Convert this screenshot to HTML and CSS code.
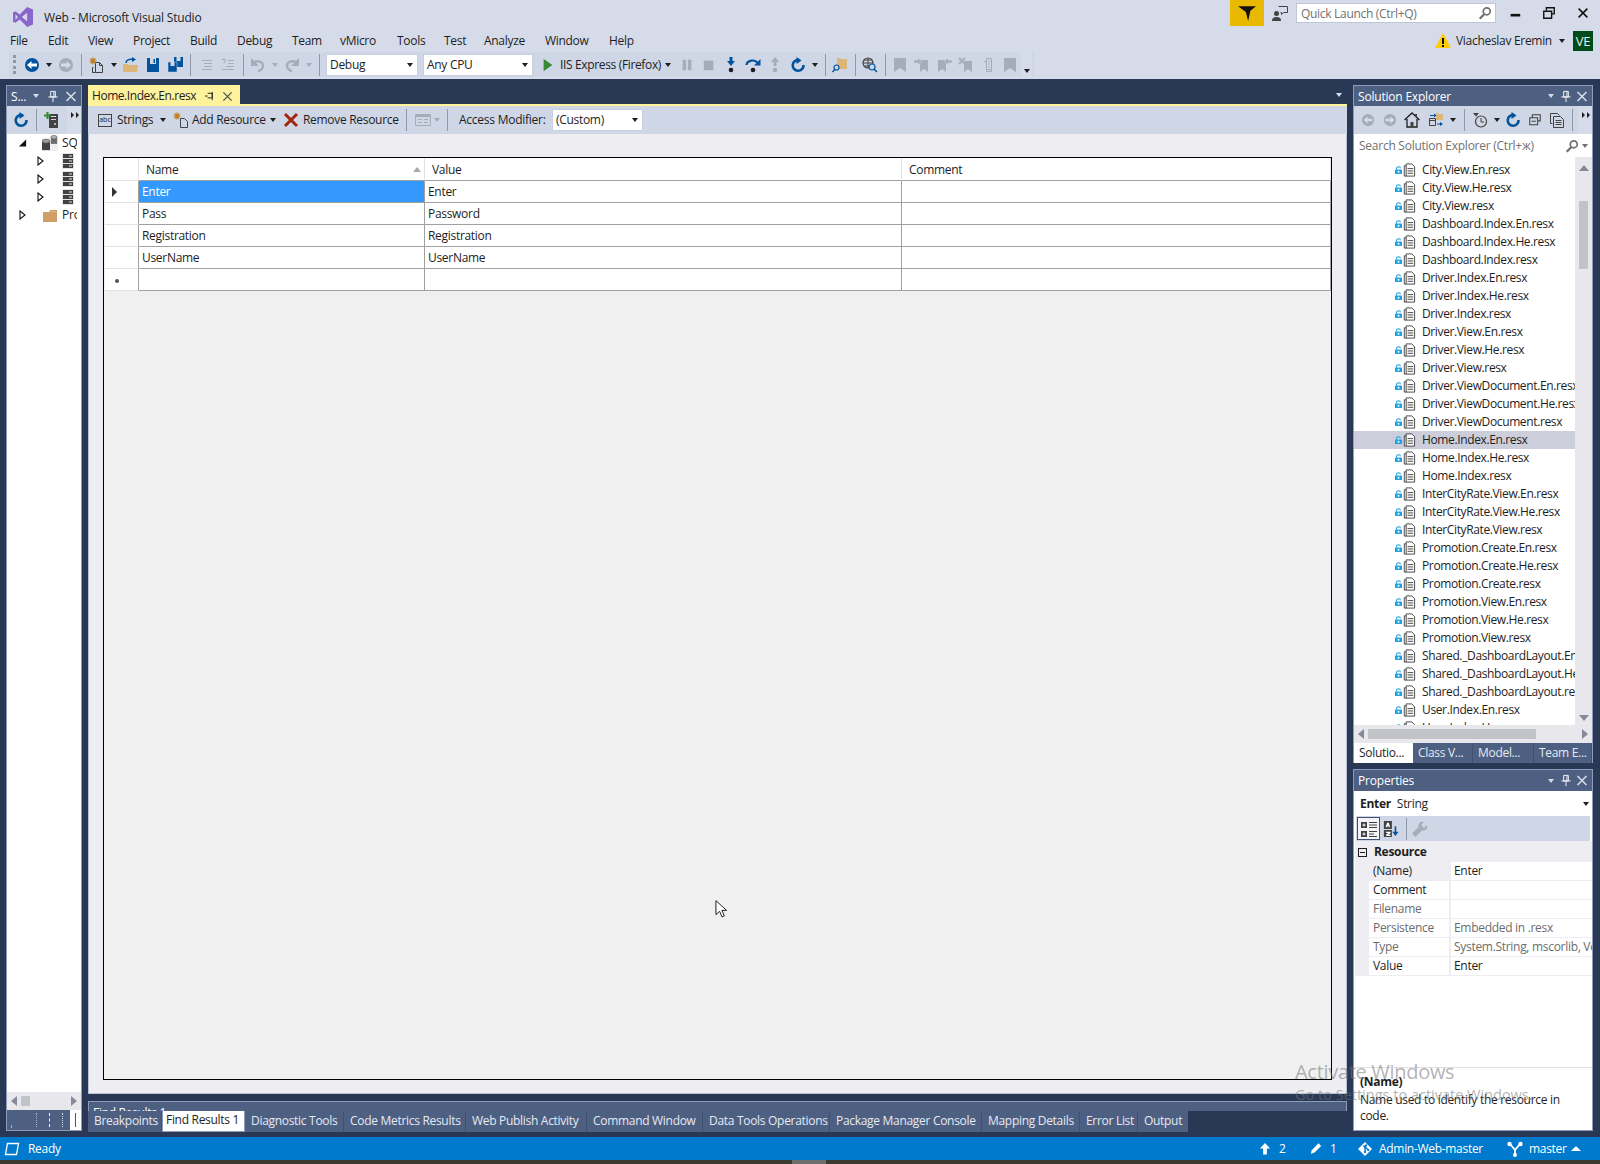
FILE: index.html
```html
<!DOCTYPE html>
<html lang="en">
<head>
<meta charset="utf-8">
<title>Web - Microsoft Visual Studio</title>
<link rel="stylesheet" href="styles.css">
</head>
<body>
<svg class="defs" aria-hidden="true">
<symbol id="vs" viewBox="0 0 16 16"><path fill="#8a66cc" fill-rule="evenodd" d="M11.3 0 5.4 6 2 3.4 0 4.3v7.4l2 .9L5.4 10l5.9 6 4.7-2V2zM11.3 4.6v6.8L7 8zM2 5.8 3.9 8 2 10.2z"/></symbol>
<symbol id="back" viewBox="0 0 16 16"><circle cx="8" cy="8" r="7" fill="#00539c"/><path fill="#fff" d="M3 8l4.5-4v2.6H13v2.8H7.500V12z"/></symbol>
<symbol id="backd" viewBox="0 0 16 16"><circle cx="8" cy="8" r="7" fill="#a6adba"/><path fill="#d6dbe9" d="M3 8l4.500-4v2.600H13v2.800H7.500V12z"/></symbol>
<symbol id="fwdd" viewBox="0 0 16 16"><circle cx="8" cy="8" r="7" fill="#a6adba"/><path fill="#d6dbe9" d="M13 8 8.500 4v2.600H3v2.800h5.500V12z"/></symbol>
<symbol id="new" viewBox="0 0 16 16"><path fill="none" stroke="#424242" d="M6.500 5.500h4l3 3v7h-7zM10.500 5.500v3h3M4.500 10.500h-1v5h3"/><path stroke="#c27d1a" stroke-width="1.200" d="M4 .5v7M.5 4h7M1.500 1.500l5 5M6.500 1.500l-5 5"/></symbol>
<symbol id="open" viewBox="0 0 16 16"><path fill="#dcb67a" d="M0 7h5l1 1h9l-1 7H0z"/><path fill="none" stroke="#00539c" stroke-width="1.500" d="M3 6C3 3 6 2 10 2.500"/><path fill="#00539c" d="M9 0l4 2.500L9 5z"/></symbol>
<symbol id="save" viewBox="0 0 16 16"><path fill="#00539c" d="M2 1h12v14H2z"/><path fill="#cfd6e5" d="M5 1h6v6H5z"/><path fill="#00539c" d="M8.500 2H10v4H8.500z"/></symbol>
<symbol id="saveall" viewBox="0 0 16 16"><path fill="#00539c" d="M7 0h9v10H7z"/><path fill="#cfd6e5" d="M9.500 0h4v4h-4z"/><path fill="#00539c" d="M1 5h9v10H1z" stroke="#cfd6e5" stroke-width=".5"/><path fill="#cfd6e5" d="M3.500 5h4v4h-4z"/></symbol>
<symbol id="lines" viewBox="0 0 16 16"><path stroke="#a6adba" d="M4 3.500h10M6 6.500h8M6 9.500h8M4 12.500h10"/></symbol>
<symbol id="lines2" viewBox="0 0 16 16"><path stroke="#a6adba" d="M8 3.500h6M8 6.500h6M6 9.500h8M2 12.500h12"/><path fill="none" stroke="#a6adba" stroke-width="1.200" d="M2 3c2-2 4 0 3 1.500L3.500 6.500"/></symbol>
<symbol id="undo" viewBox="0 0 16 16"><path fill="none" stroke="#a6adba" stroke-width="2.400" d="M4 5c5-2 9 0 9 4 0 3-3 5-5 5"/><path fill="#a6adba" d="M1 1v8h8z"/></symbol>
<symbol id="redo" viewBox="0 0 16 16"><path fill="none" stroke="#a6adba" stroke-width="2.400" d="M12 5C7 3 3 5 3 9c0 3 3 5 5 5"/><path fill="#a6adba" d="M15 1v8H7z"/></symbol>
<symbol id="play" viewBox="0 0 16 16"><path fill="#388a34" d="M3 1l10 7-10 7z"/></symbol>
<symbol id="pause" viewBox="0 0 16 16"><path fill="#a6adba" d="M3 2h4v12H3zM9 2h4v12H9z"/></symbol>
<symbol id="stop" viewBox="0 0 16 16"><path fill="#a6adba" d="M2 3h11v11H2z"/></symbol>
<symbol id="stepin" viewBox="0 0 16 16"><path fill="#00539c" d="M6.500 0h3v4H12L8 9 4 4h2.500z"/><circle cx="8" cy="13" r="2.300" fill="#1e1e1e"/></symbol>
<symbol id="stepover" viewBox="0 0 16 16"><path fill="none" stroke="#00539c" stroke-width="2.200" d="M1.500 8C2 3 10 2 12.500 6"/><path fill="#00539c" d="M15.500 2v6.500H9z"/><circle cx="8" cy="13" r="2.300" fill="#1e1e1e"/></symbol>
<symbol id="stepout" viewBox="0 0 16 16"><path fill="#a6adba" d="M6.500 9h3V5H12L8 0 4 5h2.500z"/><circle cx="8" cy="13" r="2.300" fill="#a6adba"/></symbol>
<symbol id="refresh" viewBox="0 0 16 16"><path fill="none" stroke="#00539c" stroke-width="2.600" d="M9.500 3.200a5.400 5.400 0 1 0 4 4.800"/><path fill="#00539c" d="M6.500 0v7l5-3.500z"/></symbol>
<symbol id="findf" viewBox="0 0 16 16"><path fill="#dcb67a" d="M5 1h3l1 1h6v10H5z"/><circle cx="4.500" cy="10.500" r="2.500" fill="#cfd6e5" stroke="#00539c" stroke-width="1.200"/><path stroke="#00539c" stroke-width="1.400" d="M2.800 12.500 0.500 15"/></symbol>
<symbol id="globe" viewBox="0 0 16 16"><circle cx="6" cy="6" r="5" fill="none" stroke="#424242" stroke-width="1.200"/><path stroke="#424242" d="M1 6h10M6 1v10M2.500 3h7M2.500 9h7"/><circle cx="10" cy="10" r="3" fill="#cfd6e5" stroke="#00539c" stroke-width="1.200"/><path stroke="#00539c" stroke-width="1.500" d="M12 12l3 3"/></symbol>
<symbol id="bm" viewBox="0 0 16 16"><path fill="#a6adba" d="M2 1h12v14l-6-4-6 4z"/></symbol>
<symbol id="bm2" viewBox="0 0 16 16"><path fill="#a6adba" d="M6 3h8v12l-4-3-4 3z"/><path fill="#a6adba" stroke="#cfd6e5" stroke-width=".5" d="M0 3h4V1l4 3.500L4 8V6H0z"/></symbol>
<symbol id="bm3" viewBox="0 0 16 16"><path fill="#a6adba" d="M2 3h8v12l-4-3-4 3z"/><path fill="#a6adba" stroke="#cfd6e5" stroke-width=".5" d="M16 3h-4V1L8 4.500 12 8V6h4z"/></symbol>
<symbol id="bm4" viewBox="0 0 16 16"><path fill="#a6adba" d="M6 4h8v11l-4-3-4 3z"/><path stroke="#a6adba" stroke-width="1.800" d="M1 1l6 6M7 1L1 7"/></symbol>
<symbol id="bm5" viewBox="0 0 16 16"><path fill="none" stroke="#a6adba" d="M6.500 1.500h5v11h-5zM3.500 4.500h3v10h5v-2M8 4h2M8 7h2M8 10h2"/></symbol>
<symbol id="funnel" viewBox="0 0 16 16"><path fill="#111" d="M0 2h16l-5 4-2 9-2-8z"/></symbol>
<symbol id="feedback" viewBox="0 0 16 16"><circle cx="4.500" cy="8.500" r="2.500" fill="#424242"/><path fill="#424242" d="M0 16c0-3 1.500-4 4.500-4S9 13 9 16z"/><path fill="none" stroke="#424242" d="M6.500 1.500h9v6h-4l-2 2v-2h-1"/></symbol>
<symbol id="mag" viewBox="0 0 16 16"><circle cx="10" cy="6" r="4" fill="none" stroke="#717171" stroke-width="2"/><path stroke="#717171" stroke-width="2.600" d="M7 9.500 2 14.500"/></symbol>
<symbol id="min" viewBox="0 0 16 16"><path fill="#111" d="M3 9h11v3H3z"/></symbol>
<symbol id="rest" viewBox="0 0 16 16"><path fill="none" stroke="#111" stroke-width="1.600" d="M5 5V2h9v7h-3"/><path fill="none" stroke="#111" stroke-width="1.600" d="M2 6h9v8H2z"/></symbol>
<symbol id="close" viewBox="0 0 16 16"><path stroke="#111" stroke-width="1.800" d="M3 3l10 10M13 3 3 13"/></symbol>
<symbol id="warn" viewBox="0 0 16 16"><path fill="#fc0" d="M8 0l8 15H0z"/><path fill="#111" d="M7 5h2v6H7zM7 12h2v2H7z"/></symbol>
<symbol id="pin" viewBox="0 0 12 14"><path fill="none" stroke="#fff" d="M3.500 1.500h5v6h-5zM1 7.500h10M6 8v5M7 2v5"/></symbol>
<symbol id="pind" viewBox="0 0 12 12"><path fill="none" stroke="#1e1e1e" d="M4 2.500h5v5H4M1 5.500h3M9 1v9"/></symbol>
<symbol id="x" viewBox="0 0 12 12"><path stroke="#d6dbe9" stroke-width="1.600" d="M1.500 1.500l9 9M10.500 1.500l-9 9"/></symbol>
<symbol id="xd" viewBox="0 0 12 12"><path stroke="#555" stroke-width="1.500" d="M1.500 1.500l9 9M10.500 1.500l-9 9"/></symbol>
<symbol id="dots" viewBox="0 0 8 6"><path fill="#1e1e1e" d="M0 0l3 3-3 3zM5 0l3 3-3 3z"/></symbol>
<symbol id="addsrv" viewBox="0 0 16 16"><path fill="#424242" d="M6 2h9v14H6z"/><path fill="#cfd6e5" d="M8 4h5v1H8zM8 7h5v1H8z"/><circle cx="12" cy="12" r="1" fill="#cfd6e5"/><path stroke="#388a34" stroke-width="2" d="M4.500 0v7M1 3.500h7"/></symbol>
<symbol id="sql" viewBox="0 0 18 18"><path fill="#d6d6d6" d="M0 3h18v15H0z" opacity=".4"/><path fill="#424242" d="M0 7h9v10H0z"/><ellipse cx="4.500" cy="7" rx="4.500" ry="2.200" fill="#9a9a9a" stroke="#424242" stroke-width=".6"/><path fill="#6d6d6d" d="M10 2h7v8h-7z"/><ellipse cx="13.500" cy="2.500" rx="3.500" ry="2" fill="#b5b5b5" stroke="#424242" stroke-width=".6"/></symbol>
<symbol id="srv" viewBox="0 0 12 16"><path fill="#e4e4e4" d="M0 0h12v16H0z"/><path fill="#424242" d="M1 1h10v4H1zM1 6h10v4H1zM1 11h10v4H1z"/><path fill="#e4e4e4" d="M7 2.500h3v1H7zM7 7.500h3v1H7zM7 12.500h3v1H7z"/></symbol>
<symbol id="folder" viewBox="0 0 16 14"><path fill="#cf9f66" d="M1 4h6l1-2h7v12H1z"/><path fill="#e5c9a4" d="M7.500 3.500h6.500V3H8z"/></symbol>
<symbol id="triout" viewBox="0 0 8 10"><path fill="#fff" stroke="#111" stroke-width="1.100" d="M1.500 1v8l5-4z"/></symbol>
<symbol id="tridn" viewBox="0 0 10 10"><path fill="#111" d="M1 9h8V1z"/></symbol>
<symbol id="doc" viewBox="0 0 16 16"><path fill="#fff" stroke="#424242" d="M5.500 1.500h6l3 3v10h-9zM3.500 3.500h2M3.500 3.500v11h2"/><path stroke="#424242" d="M7 6.500h6M7 9h6M7 11.500h6"/></symbol>
<symbol id="lock" viewBox="0 0 8 9"><path fill="#1ba1e2" d="M0 4h8v5H0z"/><path fill="none" stroke="#1ba1e2" stroke-width="1.300" d="M1.800 4V2.500c0-2.300 4.400-2.300 4.400 0"/><path fill="#fff" d="M3 5.500h2v2H3z"/></symbol>
<symbol id="home" viewBox="0 0 16 16"><path fill="none" stroke="#1e1e1e" stroke-width="1.300" d="M.5 8 8 1l7.500 7M3 7v8h10V7"/><path fill="#424242" d="M6.500 10h3v5h-3zM11 2h2v3h-2z"/></symbol>
<symbol id="sync" viewBox="0 0 16 16"><path fill="#dcb67a" d="M8 1h2l1 1h4v6H8z"/><path fill="none" stroke="#424242" d="M1.500 6.500h6v7h-6zM1.500 8.500h6"/><path stroke="#00539c" d="M9 12h5M2 3.500h4"/><path fill="#00539c" d="M6 1.500l2.500 2L6 5.500zM12 10l3 2-3 2z"/></symbol>
<symbol id="hist" viewBox="0 0 16 16"><circle cx="9" cy="9.500" r="5.500" fill="none" stroke="#424242" stroke-width="1.200"/><path fill="none" stroke="#424242" d="M9 6v4h3"/><path fill="#424242" d="M1 1h6L4 4.500z"/></symbol>
<symbol id="coll" viewBox="0 0 16 16"><path fill="none" stroke="#424242" stroke-width="1.200" d="M5 5V2h9v7h-3M2 5.500h9v8H2zM4 9.500h5"/></symbol>
<symbol id="copy" viewBox="0 0 16 16"><path fill="none" stroke="#424242" d="M1.500 1.500h7l2 2M1.500 1.500v10h2M4.500 4.500h7l3 3v8h-10zM6.500 8.500h6M6.500 10.500h6M6.500 12.500h6"/></symbol>
<symbol id="del" viewBox="0 0 16 16"><path stroke="#a1260d" stroke-width="3" d="M2 2l12 12M14 2 2 14"/></symbol>
<symbol id="star" viewBox="0 0 16 16"><path fill="none" stroke="#424242" d="M7.500 6.500h4l3 3v6h-7z"/><path stroke="#c27d1a" stroke-width="1.200" d="M4 .5v7M.5 4h7M1.500 1.500l5 5M6.500 1.500l-5 5"/></symbol>
<symbol id="form" viewBox="0 0 16 16"><path fill="none" stroke="#a6adba" d="M.5 2.500h15v11H.5z"/><path fill="#a6adba" d="M1 3h14v2H1zM3 7h4v1H3zM9 7h4v1H9zM3 10h4v1H3zM9 10h4v1H9z"/></symbol>
<symbol id="cat" viewBox="0 0 18 18"><path fill="#424242" d="M1 2h6v6H1zM1 11h6v6H1z"/><path fill="#fff" d="M2.500 4.500h3v1h-3zM2.500 13.500h3v1h-3zM3.500 3.500h1v3h-1zM3.500 12.500h1v3h-1z"/><path stroke="#424242" d="M9 2.500h8M9 5h8M9 7.500h8M9 11.500h8M9 14h5M9 16.500h8"/></symbol>
<symbol id="az" viewBox="0 0 18 18"><path fill="#424242" d="M1 0h9v9H1zM1 10h9v8H1z"/><path fill="#fff" d="M4.500 2h2l1.500 5H6.500l-.3-1H4.800l-.3 1H3zM3.500 12h5v1.500L6 15.500h2.500V17h-5v-1.500L6 13.500H3.500z"/><path stroke="#00539c" stroke-width="1.800" d="M14 6v9"/><path fill="#00539c" d="M10.500 12h7L14 17z"/></symbol>
<symbol id="wrench" viewBox="0 0 16 16"><path fill="#a6adba" d="M15 4l-3 3-3-3 3-3c-3-1-6 1-5.500 5L0 12.500 3.500 16 10 9.500c4 .5 6-2.500 5-5.500z"/></symbol>
<symbol id="stReady" viewBox="0 0 16 14"><path fill="none" stroke="#fff" stroke-width="1.300" d="M3.500 1.500h11l-2 11h-11z"/></symbol>
<symbol id="stUp" viewBox="0 0 12 14"><path fill="#fff" d="M6 1l5.500 6H8v6.500H4V7H.5z"/></symbol>
<symbol id="stPen" viewBox="0 0 14 14"><path fill="#fff" d="M10 1l3 3-8 8-4 1 1-4z"/></symbol>
<symbol id="stGit" viewBox="0 0 14 14"><path fill="#fff" fill-rule="evenodd" d="M7 0l7 7-7 7-7-7zM5.500 3.500 4.800 4.200 6.300 5.700V9a1.200 1.200 0 1 0 1.500 0V6.500L9 7.700a1.200 1.200 0 1 0 1-1L7.800 4.600a1.200 1.200 0 1 0-1-1z"/></symbol>
<symbol id="stBranch" viewBox="0 0 16 16"><path fill="none" stroke="#fff" stroke-width="1.800" d="M8 14V9L3 3M8 9l5-6"/><circle cx="2.500" cy="3" r="2.200" fill="#fff"/><circle cx="13.500" cy="3" r="2.200" fill="#fff"/><circle cx="8" cy="14" r="2" fill="#fff"/></symbol>
</svg>

<div class="app">
  <header class="titlebar">
    <div class="title-row">
      <svg class="logo"><use href="#vs"/></svg>
      <span class="title-text">Web - Microsoft Visual Studio</span>
      <span class="grow"></span>
      <span class="filter-box"><svg class="i18"><use href="#funnel"/></svg></span>
      <span class="feedback"><svg class="i16"><use href="#feedback"/></svg></span>
      <span class="quick"><span class="quick-text">Quick Launch (Ctrl+Q)</span><svg class="i14"><use href="#mag"/></svg></span>
      <span class="win-btn"><svg class="i14"><use href="#min"/></svg></span>
      <span class="win-btn"><svg class="i14"><use href="#rest"/></svg></span>
      <span class="win-btn"><svg class="i14"><use href="#close"/></svg></span>
    </div>
    <div class="menu-row">
      <nav class="menu">
        <span>File</span><span>Edit</span><span>View</span><span>Project</span><span>Build</span><span>Debug</span><span>Team</span><span>vMicro</span><span>Tools</span><span>Test</span><span>Analyze</span><span>Window</span><span>Help</span>
      </nav>
      <span class="grow"></span>
      <svg class="i16"><use href="#warn"/></svg>
      <span class="account">Viacheslav Eremin</span>
      <span class="caret caret-wide"></span>
      <span class="avatar">VE</span>
    </div>
    <div class="main-toolbar">
      <span class="gripper"></span>
      <span class="tool"><svg class="i16"><use href="#back"/></svg></span><span class="caret"></span>
      <span class="tool"><svg class="i16"><use href="#fwdd"/></svg></span><span class="sep sep-w"></span>
      <span class="tool"><svg class="i16"><use href="#new"/></svg></span><span class="caret"></span>
      <span class="tool"><svg class="i16"><use href="#open"/></svg></span>
      <span class="tool"><svg class="i16"><use href="#save"/></svg></span>
      <span class="tool"><svg class="i16"><use href="#saveall"/></svg></span><span class="sep sep-w"></span>
      <span class="tool"><svg class="i16"><use href="#lines"/></svg></span>
      <span class="tool"><svg class="i16"><use href="#lines2"/></svg></span><span class="sep"></span>
      <span class="tool"><svg class="i16"><use href="#undo"/></svg></span><span class="caret caret-off"></span>
      <span class="tool"><svg class="i16"><use href="#redo"/></svg></span><span class="caret caret-off"></span><span class="sep"></span>
      <span class="combo combo-debug">Debug<span class="caret"></span></span>
      <span class="combo combo-cpu">Any CPU<span class="caret"></span></span>
      <span class="tool tool-play"><svg class="i14"><use href="#play"/></svg></span>
      <span class="run-text">IIS Express (Firefox)</span><span class="caret"></span>
      <span class="tool tool-pause"><svg class="i14"><use href="#pause"/></svg></span>
      <span class="tool"><svg class="i14"><use href="#stop"/></svg></span>
      <span class="tool"><svg class="i16"><use href="#stepin"/></svg></span>
      <span class="tool"><svg class="i16"><use href="#stepover"/></svg></span>
      <span class="tool"><svg class="i16"><use href="#stepout"/></svg></span>
      <span class="tool tool-restart"><svg class="i16"><use href="#refresh"/></svg></span><span class="caret"></span><span class="sep"></span>
      <span class="tool"><svg class="i16"><use href="#findf"/></svg></span><span class="sep"></span>
      <span class="tool"><svg class="i16"><use href="#globe"/></svg></span><span class="sep"></span>
      <span class="tool"><svg class="i16"><use href="#bm"/></svg></span>
      <span class="tool"><svg class="i16"><use href="#bm2"/></svg></span>
      <span class="tool"><svg class="i16"><use href="#bm3"/></svg></span>
      <span class="tool"><svg class="i16"><use href="#bm4"/></svg></span>
      <span class="tool"><svg class="i16"><use href="#bm5"/></svg></span>
      <span class="tool"><svg class="i16"><use href="#bm"/></svg></span>
      <span class="overflow"><span class="caret"></span></span>
    </div>
  </header>

  <main class="workspace">
    <section class="col-left">
      <div class="pane pane-fill">
        <div class="pane-title"><span class="pane-name">S...</span><span class="pane-ctl"><span class="caret caret-light"></span><svg class="i12"><use href="#pin"/></svg><svg class="i12"><use href="#x"/></svg></span></div>
        <div class="pane-toolbar">
          <span class="tool"><svg class="i16"><use href="#refresh"/></svg></span><span class="sep"></span>
          <span class="tool"><svg class="i16"><use href="#addsrv"/></svg></span>
          <span class="grow"></span>
          <span class="dots"><svg class="i8"><use href="#dots"/></svg></span>
        </div>
        <div class="tree">
          <div class="tree-row tr-root"><svg class="i8x"><use href="#tridn"/></svg><svg class="i16"><use href="#sql"/></svg><span class="tree-label">SQ</span></div>
          <div class="tree-row tr-child"><svg class="i8x"><use href="#triout"/></svg><svg class="srv"><use href="#srv"/></svg></div>
          <div class="tree-row tr-child"><svg class="i8x"><use href="#triout"/></svg><svg class="srv"><use href="#srv"/></svg></div>
          <div class="tree-row tr-child"><svg class="i8x"><use href="#triout"/></svg><svg class="srv"><use href="#srv"/></svg></div>
          <div class="tree-row tr-root"><svg class="i8x"><use href="#triout"/></svg><svg class="i16"><use href="#folder"/></svg><span class="tree-label">Pro</span></div>
        </div>
        <div class="hscroll hscroll-left"><span class="arrow-l"></span><span class="thumb-left"></span><span class="grow"></span><span class="arrow-r"></span></div>
        <div class="left-tabs"><span class="lt lt-t"></span><span class="lt lt-a"></span><span class="lt lt-b"></span><span class="lt lt-c"></span><span class="lt lt-on"></span></div>
      </div>
    </section>

    <section class="col-doc">
      <div class="doc">
        <div class="doc-tabs">
          <div class="doc-tab"><span class="doc-tab-name">Home.Index.En.resx</span><svg class="i10"><use href="#pind"/></svg><svg class="i10"><use href="#xd"/></svg></div>
          <span class="grow"></span>
          <span class="caret caret-light"></span>
        </div>
        <div class="doc-toolbar">
          <span class="abc">abc</span><span class="dt-label dt-strings">Strings</span><span class="caret"></span>
          <svg class="i16 dt-add"><use href="#star"/></svg><span class="dt-label dt-addres">Add Resource</span><span class="caret"></span>
          <svg class="i16 dt-del"><use href="#del"/></svg><span class="dt-label dt-remove">Remove Resource</span><span class="sep"></span>
          <svg class="i16 dt-form"><use href="#form"/></svg><span class="caret caret-off"></span><span class="sep"></span>
          <span class="dt-label dt-access">Access Modifier:</span>
          <span class="combo combo-access">(Custom)<span class="caret"></span></span>
        </div>
        <div class="doc-body">
          <div class="grid-box">
            <div class="dg-row dg-head"><span class="dg-rh"></span><span class="dg-c dg-name">Name<span class="sort"></span></span><span class="dg-c">Value</span><span class="dg-c">Comment</span></div>
            <div class="dg-row"><span class="dg-rh"><span class="rh-arrow"></span></span><span class="dg-c dg-sel">Enter</span><span class="dg-c">Enter</span><span class="dg-c"></span></div>
            <div class="dg-row"><span class="dg-rh"></span><span class="dg-c">Pass</span><span class="dg-c">Password</span><span class="dg-c"></span></div>
            <div class="dg-row"><span class="dg-rh"></span><span class="dg-c">Registration</span><span class="dg-c">Registration</span><span class="dg-c"></span></div>
            <div class="dg-row"><span class="dg-rh"></span><span class="dg-c">UserName</span><span class="dg-c">UserName</span><span class="dg-c"></span></div>
            <div class="dg-row"><span class="dg-rh"><span class="rh-star"></span></span><span class="dg-c"></span><span class="dg-c"></span><span class="dg-c"></span></div>
          </div>
        </div>
      </div>
      <div class="find-stub"><span class="find-stub-text">Find Results 1</span></div>
      <div class="bottom-tabs">
        <span>Breakpoints</span><span class="bt-on">Find Results 1</span><span>Diagnostic Tools</span><span>Code Metrics Results</span><span>Web Publish Activity</span><span>Command Window</span><span>Data Tools Operations</span><span>Package Manager Console</span><span>Mapping Details</span><span>Error List</span><span>Output</span>
      </div>
    </section>

    <section class="col-right">
      <div class="pane pane-se">
        <div class="pane-title"><span class="pane-name">Solution Explorer</span><span class="pane-ctl"><span class="caret caret-light"></span><svg class="i12"><use href="#pin"/></svg><svg class="i12"><use href="#x"/></svg></span></div>
        <div class="pane-toolbar se-toolbar">
          <span class="tool"><svg class="i14"><use href="#backd"/></svg></span>
          <span class="tool"><svg class="i14"><use href="#fwdd"/></svg></span>
          <span class="tool"><svg class="i16"><use href="#home"/></svg></span>
          <span class="tool tool-sync"><svg class="i16"><use href="#sync"/></svg></span><span class="caret"></span><span class="sep sep-2"></span>
          <span class="tool"><svg class="i16"><use href="#hist"/></svg></span><span class="caret"></span>
          <span class="tool tool-tight"><svg class="i16"><use href="#refresh"/></svg></span>
          <span class="tool"><svg class="i14"><use href="#coll"/></svg></span>
          <span class="tool"><svg class="i16"><use href="#copy"/></svg></span><span class="sep"></span>
          <span class="grow"></span>
          <span class="dots"><svg class="i8"><use href="#dots"/></svg></span>
        </div>
        <div class="se-search"><span class="se-search-text">Search Solution Explorer (Ctrl+ж)</span><svg class="i14"><use href="#mag"/></svg><span class="caret caret-grey"></span></div>
        <div class="se-body">
          <div class="se-list">
            <div class="se-row"><svg class="lock"><use href="#lock"/></svg><svg class="doc-ic"><use href="#doc"/></svg><span>City.View.En.resx</span></div>
            <div class="se-row"><svg class="lock"><use href="#lock"/></svg><svg class="doc-ic"><use href="#doc"/></svg><span>City.View.He.resx</span></div>
            <div class="se-row"><svg class="lock"><use href="#lock"/></svg><svg class="doc-ic"><use href="#doc"/></svg><span>City.View.resx</span></div>
            <div class="se-row"><svg class="lock"><use href="#lock"/></svg><svg class="doc-ic"><use href="#doc"/></svg><span>Dashboard.Index.En.resx</span></div>
            <div class="se-row"><svg class="lock"><use href="#lock"/></svg><svg class="doc-ic"><use href="#doc"/></svg><span>Dashboard.Index.He.resx</span></div>
            <div class="se-row"><svg class="lock"><use href="#lock"/></svg><svg class="doc-ic"><use href="#doc"/></svg><span>Dashboard.Index.resx</span></div>
            <div class="se-row"><svg class="lock"><use href="#lock"/></svg><svg class="doc-ic"><use href="#doc"/></svg><span>Driver.Index.En.resx</span></div>
            <div class="se-row"><svg class="lock"><use href="#lock"/></svg><svg class="doc-ic"><use href="#doc"/></svg><span>Driver.Index.He.resx</span></div>
            <div class="se-row"><svg class="lock"><use href="#lock"/></svg><svg class="doc-ic"><use href="#doc"/></svg><span>Driver.Index.resx</span></div>
            <div class="se-row"><svg class="lock"><use href="#lock"/></svg><svg class="doc-ic"><use href="#doc"/></svg><span>Driver.View.En.resx</span></div>
            <div class="se-row"><svg class="lock"><use href="#lock"/></svg><svg class="doc-ic"><use href="#doc"/></svg><span>Driver.View.He.resx</span></div>
            <div class="se-row"><svg class="lock"><use href="#lock"/></svg><svg class="doc-ic"><use href="#doc"/></svg><span>Driver.View.resx</span></div>
            <div class="se-row"><svg class="lock"><use href="#lock"/></svg><svg class="doc-ic"><use href="#doc"/></svg><span>Driver.ViewDocument.En.resx</span></div>
            <div class="se-row"><svg class="lock"><use href="#lock"/></svg><svg class="doc-ic"><use href="#doc"/></svg><span>Driver.ViewDocument.He.resx</span></div>
            <div class="se-row"><svg class="lock"><use href="#lock"/></svg><svg class="doc-ic"><use href="#doc"/></svg><span>Driver.ViewDocument.resx</span></div>
            <div class="se-row se-sel"><svg class="lock"><use href="#lock"/></svg><svg class="doc-ic"><use href="#doc"/></svg><span>Home.Index.En.resx</span></div>
            <div class="se-row"><svg class="lock"><use href="#lock"/></svg><svg class="doc-ic"><use href="#doc"/></svg><span>Home.Index.He.resx</span></div>
            <div class="se-row"><svg class="lock"><use href="#lock"/></svg><svg class="doc-ic"><use href="#doc"/></svg><span>Home.Index.resx</span></div>
            <div class="se-row"><svg class="lock"><use href="#lock"/></svg><svg class="doc-ic"><use href="#doc"/></svg><span>InterCityRate.View.En.resx</span></div>
            <div class="se-row"><svg class="lock"><use href="#lock"/></svg><svg class="doc-ic"><use href="#doc"/></svg><span>InterCityRate.View.He.resx</span></div>
            <div class="se-row"><svg class="lock"><use href="#lock"/></svg><svg class="doc-ic"><use href="#doc"/></svg><span>InterCityRate.View.resx</span></div>
            <div class="se-row"><svg class="lock"><use href="#lock"/></svg><svg class="doc-ic"><use href="#doc"/></svg><span>Promotion.Create.En.resx</span></div>
            <div class="se-row"><svg class="lock"><use href="#lock"/></svg><svg class="doc-ic"><use href="#doc"/></svg><span>Promotion.Create.He.resx</span></div>
            <div class="se-row"><svg class="lock"><use href="#lock"/></svg><svg class="doc-ic"><use href="#doc"/></svg><span>Promotion.Create.resx</span></div>
            <div class="se-row"><svg class="lock"><use href="#lock"/></svg><svg class="doc-ic"><use href="#doc"/></svg><span>Promotion.View.En.resx</span></div>
            <div class="se-row"><svg class="lock"><use href="#lock"/></svg><svg class="doc-ic"><use href="#doc"/></svg><span>Promotion.View.He.resx</span></div>
            <div class="se-row"><svg class="lock"><use href="#lock"/></svg><svg class="doc-ic"><use href="#doc"/></svg><span>Promotion.View.resx</span></div>
            <div class="se-row"><svg class="lock"><use href="#lock"/></svg><svg class="doc-ic"><use href="#doc"/></svg><span>Shared._DashboardLayout.En.resx</span></div>
            <div class="se-row"><svg class="lock"><use href="#lock"/></svg><svg class="doc-ic"><use href="#doc"/></svg><span>Shared._DashboardLayout.He.resx</span></div>
            <div class="se-row"><svg class="lock"><use href="#lock"/></svg><svg class="doc-ic"><use href="#doc"/></svg><span>Shared._DashboardLayout.resx</span></div>
            <div class="se-row"><svg class="lock"><use href="#lock"/></svg><svg class="doc-ic"><use href="#doc"/></svg><span>User.Index.En.resx</span></div>
            <div class="se-row"><svg class="lock"><use href="#lock"/></svg><svg class="doc-ic"><use href="#doc"/></svg><span>User.Index.He.resx</span></div>
          </div>
          <div class="vscroll"><span class="arrow-u"></span><span class="vthumb"></span><span class="grow"></span><span class="arrow-d"></span></div>
        </div>
        <div class="hscroll"><span class="arrow-l"></span><span class="thumb-se"></span><span class="grow"></span><span class="arrow-r"></span></div>
        <div class="se-tabs"><span class="se-tab-on">Solutio...</span><span>Class V...</span><span>Model...</span><span>Team E...</span></div>
      </div>
      <div class="pane pane-props">
        <div class="pane-title"><span class="pane-name">Properties</span><span class="pane-ctl"><span class="caret caret-light"></span><svg class="i12"><use href="#pin"/></svg><svg class="i12"><use href="#x"/></svg></span></div>
        <div class="prop-object"><b>Enter</b><span class="prop-type">String</span><span class="grow"></span><span class="caret"></span></div>
        <div class="prop-toolbar">
          <span class="pt-on"><svg class="i18"><use href="#cat"/></svg></span>
          <span class="tool"><svg class="i16"><use href="#az"/></svg></span><span class="sep"></span>
          <span class="tool"><svg class="i16"><use href="#wrench"/></svg></span>
        </div>
        <div class="prop-cat"><span class="minus"></span><b>Resource</b></div>
        <div class="prop-row prop-cur"><span class="pl">(Name)</span><span class="pv">Enter</span></div>
        <div class="prop-row"><span class="pl">Comment</span><span class="pv"></span></div>
        <div class="prop-row prop-ro"><span class="pl">Filename</span><span class="pv"></span></div>
        <div class="prop-row prop-ro"><span class="pl">Persistence</span><span class="pv">Embedded in .resx</span></div>
        <div class="prop-row prop-ro"><span class="pl">Type</span><span class="pv">System.String, mscorlib, Version=4</span></div>
        <div class="prop-row"><span class="pl">Value</span><span class="pv">Enter</span></div>
        <div class="grow"></div>
        <div class="prop-desc"><b>(Name)</b><p>Name used to identify the resource in code.</p></div>
      </div>
    </section>
  </main>

  <footer class="statusbar">
    <svg class="st-ready"><use href="#stReady"/></svg>
    <span class="st-text">Ready</span>
    <span class="grow"></span>
    <div class="st-right">
      <span class="st-ic"><svg class="i12"><use href="#stUp"/></svg></span><span>2</span>
      <span class="st-ic"><svg class="i12"><use href="#stPen"/></svg></span><span>1</span>
      <span class="st-ic"><svg class="i14"><use href="#stGit"/></svg></span><span>Admin-Web-master</span>
      <span class="st-ic"><svg class="i16"><use href="#stBranch"/></svg></span><span>master</span>
      <span class="st-up"></span>
    </div>
  </footer>
  <div class="taskbar"><span class="task-item"></span></div>
  <div class="watermark"><div class="wm-big">Activate Windows</div><div class="wm-small">Go to Settings to activate Windows.</div></div>
  <svg class="cursor" viewBox="0 0 14 20"><path fill="#fff" stroke="#111" d="M1 1v15l4-3.500 2.500 6 2.500-1-2.500-6h5z"/></svg>
</div>
</body>
</html>
```
FILE: styles.css
```css
* { box-sizing: border-box; }
html, body { margin: 0; height: 100%; }
body { width: 1600px; height: 1164px; overflow: hidden; background: #293955; color: #1e1e1e; font: 12px/16px "Open Sans", "Noto Sans", sans-serif; letter-spacing: -.3px; }
.defs { position: absolute; width: 0; height: 0; }
svg { display: block; flex: none; }
b { font-weight: 700; }
.grow { flex: 1 1 0; }
.app { position: relative; display: flex; flex-direction: column; height: 1164px; }
.i8 { width: 8px; height: 6px; }
.i10 { width: 11px; height: 11px; }
.i12 { width: 12px; height: 13px; }
.i14 { width: 14px; height: 14px; }
.i16 { width: 16px; height: 16px; }
.i18 { width: 18px; height: 18px; }
.i8x { width: 9px; height: 10px; }

/* title area */
.titlebar { height: 79px; background: #d6dbe9; flex: none; }
.title-row { height: 29px; display: flex; align-items: flex-start; }
.logo { width: 20px; height: 20px; margin: 7px 0 0 13px; }
.title-text { margin: 10px 0 0 11px; letter-spacing: -.2px; }
.filter-box { width: 34px; height: 26px; background: #e8b900; display: flex; align-items: center; justify-content: center; }
.feedback { width: 32px; height: 26px; display: flex; align-items: center; justify-content: center; }
.quick { width: 200px; height: 20px; margin: 3px 2px 0 0; background: #fff; border: 1px solid #c0c6d6; color: #717171; display: flex; align-items: center; justify-content: space-between; padding: 0 3px 0 4px; }
.quick-text { padding-top: 1px; }
.win-btn { width: 34px; height: 26px; display: flex; align-items: center; justify-content: center; }
.menu-row { height: 23px; display: flex; align-items: center; padding-right: 7px; }
.menu { margin-left: 10px; display: grid; grid-template-columns: 38px 40px 45px 57px 47px 55px 48px 57px 47px 40px 61px 64px 40px; }
.account { margin-left: 5px; width: 95px; white-space: nowrap; }
.avatar { width: 20px; height: 20px; margin-left: 5px; background: #004b1c; color: #e8f0e8; font-size: 13px; line-height: 20px; text-align: center; }
.main-toolbar { margin-left: 9px; width: 1025px; height: 25px; background: #cfd6e5; display: flex; align-items: center; }
.gripper { width: 12px; height: 19px; border-left: 3px dotted #8e97a9; margin-left: 4px; margin-right: -4px; }
.tool { width: 22px; height: 22px; flex: none; display: flex; align-items: center; justify-content: center; }
.tool-play { margin-left: 4px; }
.tool-pause { margin-left: 2px; }
.tool-restart { margin-left: 1px; }
.tool-tight { margin-left: -1px; }
.tool-sync { margin-left: 2px; }
.caret { width: 12px; height: 12px; flex: none; display: block; position: relative; }
.caret::after { content: ""; position: absolute; left: 3px; top: 4px; border: 3.500px solid transparent; border-top: 4px solid #1e1e1e; border-bottom: 0; }
.caret-off::after { border-top-color: #a6adba; }
.caret-light::after { border-top-color: #d6dbe9; }
.caret-grey::after { border-top-color: #717171; }
.caret-wide { margin-left: 5px; }
.sep { width: 8px; height: 22px; flex: none; background: linear-gradient(#8e97a9, #8e97a9) center / 1px 100% no-repeat; }
.sep-w { width: 9px; }
.sep-2 { width: 10px; }
.combo { height: 22px; background: #fff; border: 1px solid #c8cfdf; padding-left: 3px; display: flex; align-items: center; justify-content: space-between; padding-right: 1px; flex: none; }
.combo-debug { width: 92px; margin-left: 3px; }
.combo-cpu { width: 110px; margin-left: 5px; }
.run-text { width: 103px; padding-left: 1px; white-space: nowrap; letter-spacing: -.35px; }
.overflow { width: 11px; height: 25px; background: #d6dbe9; display: flex; align-items: flex-end; }

/* workspace */
.workspace { flex: 1 1 0; min-height: 0; padding: 6px 7px 6px 6px; display: flex; gap: 6px; background: #293955; }
.col-left { width: 76px; display: flex; flex-direction: column; }
.col-doc { width: 1259px; display: flex; flex-direction: column; }
.col-right { width: 240px; display: flex; flex-direction: column; gap: 6px; }
.pane { background: #fff; border: 1px solid #8e9bbc; display: flex; flex-direction: column; min-height: 0; }
.pane-fill { flex: 1 1 0; }
.pane-se { height: 678px; }
.pane-props { flex: 1 1 0; }
.pane-props .pane-title { height: 21px; }
.pane-title { height: 20px; flex: none; background: #4d6082; color: #fff; display: flex; align-items: center; padding: 0 4px 0 4px; overflow: hidden; justify-content: space-between; white-space: nowrap; }
.pane-name { color: #fff; letter-spacing: -.2px; padding-top: 1px; }
.pane-props .pane-name { padding-top: 0; }
.pane-ctl { display: flex; align-items: center; gap: 6px; margin-left: 4px; }
.pane-ctl .caret { width: 11px; }
.col-right .pane-ctl { gap: 4px; }
.pane-toolbar { height: 28px; flex: none; background: #cfd6e5; display: flex; align-items: center; }
.pane-toolbar > .tool:first-child { margin-left: 3px; }
.dots { width: 14px; align-self: stretch; background: #d6dbe9; padding: 6px 0 0 4px; flex: none; }
.tree { flex: 1 1 0; background: #fff; overflow: hidden; margin-right: 4px; }
.tree-row { height: 18px; display: flex; align-items: center; white-space: nowrap; overflow: hidden; }
.tr-root { padding-left: 11px; }
.tr-root .i16 { margin-left: 15px; }
.tree-label { margin-left: 4px; letter-spacing: -.2px; }
.tr-child { padding-left: 29px; }
.srv { width: 12px; height: 16px; margin-left: 17px; }
.hscroll { height: 18px; flex: none; background: #e8e8ec; display: flex; align-items: center; padding: 0 4px; }
.arrow-l, .arrow-r { width: 6px; height: 10px; flex: none; border: 5px solid transparent; }
.arrow-l { border-right: 6px solid #868999; border-left: 0; }
.arrow-r { border-left: 6px solid #868999; border-right: 0; }
.thumb-left { width: 9px; height: 10px; margin-left: 4px; background: #c2c3c9; }
.thumb-se { width: 168px; height: 10px; margin-left: 4px; background: #c2c3c9; }
.left-tabs { height: 20px; flex: none; background: #4d6082; display: grid; grid-template-columns: 5px 25px 13px 13px 7px 1fr; }
.lt { display: block; }
.lt-t { border-right: 1px solid #aab4c8; margin: 15px 0 2px; }
.lt-a { border-right: 1px dotted #aab4c8; margin: 3px 0; }
.lt-b { border-right: 1px dashed #fff; margin: 3px 0; }
.lt-c { border-right: 1px dotted #d6dbe9; margin: 3px 0; }
.lt-on { background: linear-gradient(to right, transparent 5px, #555 5px, #555 6px, transparent 6px) 0 3px / 100% 14px no-repeat, #fff; grid-column: 6; }

/* document */
.doc { height: 1009px; flex: none; display: flex; flex-direction: column; }
.doc-tabs { height: 19px; display: flex; align-items: stretch; flex: none; }
.doc-tabs > .caret { align-self: center; margin-right: 2px; }
.doc-tab { width: 152px; background: #fff29d; display: flex; align-items: center; padding: 3px 0 0 4px; white-space: nowrap; }
.doc-tab-name { width: 114px; letter-spacing: -.45px; }
.doc-tab .i10 { margin-right: 7px; }
.doc-toolbar { height: 30px; flex: none; border-top: 2px solid #fff29d; background: #cfd6e5; display: flex; align-items: center; white-space: nowrap; }
.abc { width: 14px; height: 13px; margin-left: 10px; border: 1px solid #424242; font-size: 7px; line-height: 10px; text-align: center; letter-spacing: 0; overflow: hidden; }
.dt-label { display: block; }
.dt-strings { width: 40px; margin-left: 5px; }
.dt-add { margin-left: 4px; }
.dt-addres { width: 75px; margin-left: 3px; }
.dt-del { margin-left: 4px; }
.dt-remove { width: 99px; margin-left: 4px; }
.dt-form { margin-left: 5px; }
.dt-access { width: 93px; margin-left: 8px; letter-spacing: -.25px; }
.combo-access { width: 91px; height: 22px; }
.doc-body { flex: 1 1 0; background: #eeeef2; border: 1px solid #b8c2d6; border-top: 0; padding: 23px 14px 13px 14px; display: flex; }
.grid-box { flex: 1 1 0; border: 1px solid #000; padding: 0 0 0 1px; background: #f0f0f0; }
.dg-row { display: grid; grid-template-columns: 34px 286px 477px 1fr; height: 22px; }
.dg-rh { background: #fff; border-bottom: 1px solid #e3e3e3; border-right: 1px solid #a0a0a0; display: flex; align-items: center; justify-content: center; }
.dg-c { background: #fff; border-bottom: 1px solid #a0a0a0; border-right: 1px solid #a0a0a0; padding: 3px 0 0 3px; white-space: nowrap; overflow: hidden; position: relative; }
.dg-head { height: 23px; }
.dg-head .dg-rh { border-right-color: #e3e3e3; border-bottom-color: #e3e3e3; }
.dg-head .dg-c { padding: 4px 0 0 7px; border-right-color: #e3e3e3; }
.dg-sel { background: #3399ff; color: #fff; }
.sort { position: absolute; right: 3px; top: 9px; border: 4.500px solid transparent; border-bottom: 5px solid #a9a9a9; border-top: 0; }
.rh-arrow { border: 5px solid transparent; border-left: 5px solid #333; border-right: 0; margin-left: -14px; }
.rh-star { width: 4px; height: 4px; border-radius: 50%; background: #555; margin-left: -10px; margin-top: 2px; }
.find-stub { height: 10px; margin-top: 7px; flex: none; background: #4d6082; border: 1px solid #8e9bbc; border-bottom: 0; overflow: hidden; color: #fff; padding-left: 4px; }
.find-stub-text { display: block; margin-top: 3px; }
.bottom-tabs { height: 21px; width: 1100px; flex: none; display: flex; background: #4d6082; color: #e6e9f2; white-space: nowrap; }
.bottom-tabs span { padding: 2px 6px 0; border-right: 1px solid #3f5070; }
.bottom-tabs span:nth-child(1) { width: 74px; }
.bottom-tabs span:nth-child(2) { width: 83px; background: #fff; color: #1e1e1e; border: 1px solid #8e9bbc; border-top: 0; padding: 1px 3px 0; }
.bottom-tabs span:nth-child(3) { width: 99px; }
.bottom-tabs span:nth-child(4) { width: 122px; }
.bottom-tabs span:nth-child(5) { width: 121px; }
.bottom-tabs span:nth-child(6) { width: 116px; }
.bottom-tabs span:nth-child(7) { width: 127px; }
.bottom-tabs span:nth-child(8) { width: 152px; }
.bottom-tabs span:nth-child(9) { width: 98px; }
.bottom-tabs span:nth-child(10) { width: 58px; }
.bottom-tabs span:nth-child(11) { width: 50px; border-right: 0; }

/* solution explorer */
.se-search { height: 19px; margin: 2px 1px 2px; flex: none; background: #fff; display: flex; align-items: center; color: #717171; padding-left: 4px; white-space: nowrap; overflow: hidden; }
.se-search-text { width: 210px; letter-spacing: -.25px; }
.se-body { height: 568px; flex: none; display: flex; overflow: hidden; }
.se-list { flex: 1 1 0; min-width: 0; overflow: hidden; padding-top: 4px; letter-spacing: -.37px; }
.se-row { height: 18px; display: flex; align-items: center; padding-left: 41px; white-space: nowrap; overflow: hidden; }
.se-sel { background: #cccedb; }
.lock { width: 7px; height: 8px; }
.doc-ic { width: 15px; height: 16px; margin: 0 6px 0 -1px; }
.vscroll { width: 17px; flex: none; background: #e8e8ec; display: flex; flex-direction: column; align-items: center; padding: 8px 0 4px; }
.arrow-u { border: 5px solid transparent; border-bottom: 6px solid #868999; border-top: 0; }
.arrow-d { border: 5px solid transparent; border-top: 6px solid #868999; border-bottom: 0; }
.vthumb { width: 9px; height: 68px; margin-top: 30px; background: #c2c3c9; }
.se-tabs { height: 20px; flex: none; display: grid; grid-template-columns: 59px 60px 61px 1fr; background: #4d6082; color: #e6e9f2; white-space: nowrap; }
.se-tabs span { padding: 2px 0 0 5px; border-right: 1px solid #3f5070; }
.se-tabs .se-tab-on { background: #fff; color: #1e1e1e; border: 0; }

/* properties */
.prop-object { height: 25px; flex: none; display: flex; align-items: center; padding-left: 6px; background: #fff; }
.prop-type { margin-left: 6px; }
.prop-toolbar { height: 25px; margin: 0 2px; flex: none; background: #cfd6e5; display: flex; align-items: center; padding-left: 1px; }
.prop-toolbar .tool:last-child { margin-left: -1px; }
.pt-on { width: 23px; height: 23px; background: #f5f5f8; border: 1px solid #3f5070; display: flex; align-items: center; justify-content: center; }
.prop-cat { height: 21px; flex: none; background: #eeeef2; display: flex; align-items: center; margin-left: 1px; padding-top: 1px; }
.minus { width: 9px; height: 9px; margin: 0 7px 0 3px; border: 1px solid #1e1e1e; background: linear-gradient(#1e1e1e, #1e1e1e) center / 5px 1px no-repeat; }
.prop-row { height: 19px; flex: none; display: grid; grid-template-columns: 82px 1fr; margin-left: 1px; padding-left: 14px; background: linear-gradient(#eeeef2, #eeeef2) left / 14px 100% no-repeat; white-space: nowrap; overflow: hidden; }
.pl { padding: 1px 0 0 4px; border-bottom: 1px solid #eeeef2; border-right: 2px solid #eeeef2; }
.pv { padding: 1px 0 0 3px; border-bottom: 1px solid #eeeef2; overflow: hidden; }
.prop-cur .pl { background: #eeeef2; }
.prop-ro { color: #6d6d6d; }
.prop-desc { height: 63px; flex: none; border-top: 1px solid #e0e0e4; padding: 6px 6px 0; }
.prop-desc p { margin: 2px 0 0; line-height: 16px; }

/* status */
.statusbar { height: 23px; flex: none; background: #007acc; color: #fff; display: flex; align-items: center; }
.st-ready { width: 16px; height: 14px; margin-left: 4px; }
.st-text { margin-left: 8px; }
.st-right { display: grid; grid-template-columns: 18px 33px 18px 31px 18px 132px 18px 43px 16px; align-items: center; margin-right: 17px; white-space: nowrap; }
.st-right > span:not(.st-ic):not(.st-up) { padding-left: 5px; }
.st-ic { display: flex; align-items: center; justify-content: center; }
.st-up { width: 0; height: 0; margin-left: 4px; border: 5px solid transparent; border-bottom: 5px solid #fff; border-top: 0; }
.taskbar { height: 4px; flex: none; background: #3b3a30; display: flex; padding-left: 792px; }
.task-item { width: 34px; background: #6e6e6e; }

/* overlays */
.watermark { position: absolute; left: 1295px; top: 1059px; color: rgba(115, 115, 115, .55); white-space: nowrap; pointer-events: none; }
.wm-big { font-size: 20px; line-height: 26px; letter-spacing: -.3px; }
.wm-small { font-size: 14.500px; line-height: 20px; letter-spacing: 0; }
.cursor { position: absolute; left: 715px; top: 899px; width: 13px; height: 20px; }
```
